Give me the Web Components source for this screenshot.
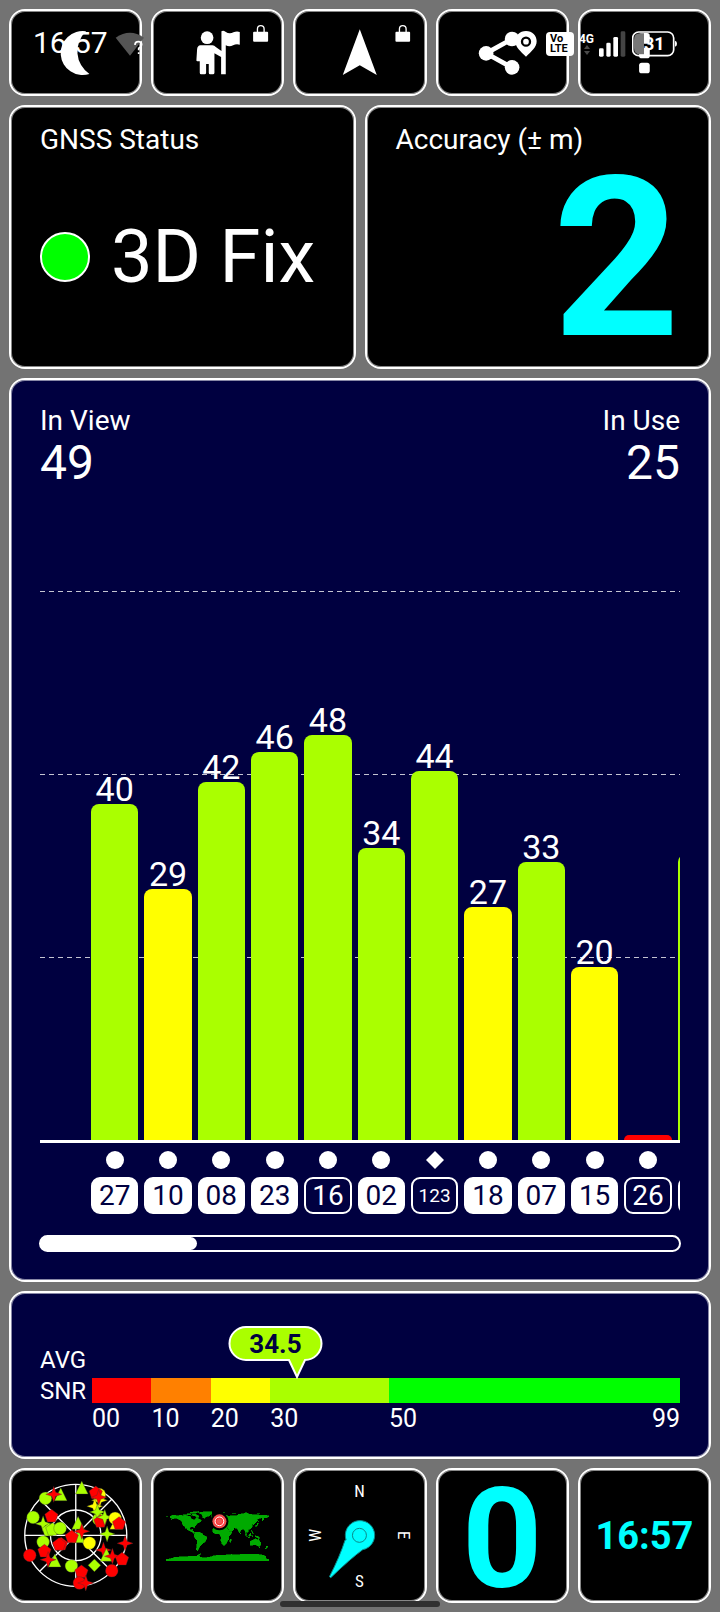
<!DOCTYPE html>
<html lang="en">
<head>
<meta charset="utf-8">
<meta name="viewport" content="width=device-width, initial-scale=1">
<title>GNSS Status</title>
<style>
  body { margin: 0; background: #737373; color: #fff; font-family: Roboto, "Liberation Sans", sans-serif; }
</style>
</head>
<body>
<gnss-app></gnss-app>

<template id="tile">
  <style>
    :host { display: flex; flex-direction: column; box-sizing: border-box; min-width: 0; border: 2px solid #fff; border-radius: 16px; background: #000; box-shadow: inset 0 0 0 1px #fff8; }
    :host([navy]) { background: #000040; }
  </style>
  <slot></slot>
</template>

<template id="tool">
  <style>
    :host { display: block; min-width: 0; }
    button { display: block; box-sizing: border-box; width: 100%; height: 87px; padding: 0; border: 2px solid #fff; border-radius: 16px; background: #000; color: #fff; box-shadow: inset 0 0 0 1px #fff8; }
  </style>
  <button type="button"><slot></slot></button>
</template>

<template id="status">
  <style>
    :host { display: flex; align-items: center; position: absolute; top: 31px; left: 0; right: 0; height: 26px; padding: 0 43px 0 33px; pointer-events: none; }
    .clock { font-size: 30px; line-height: 24px; padding-bottom: 2px; margin-right: 7px; }
    .right { margin-left: auto; display: flex; align-items: center; gap: 6px; }
    .volte { width: 28px; height: 24px; box-sizing: border-box; padding: 2px 4px; border-radius: 4px; background: #fff; color: #000; font-size: 11px; line-height: 10px; font-weight: 700; }
    .net { display: flex; flex-direction: column; align-items: center; width: 13px; font-size: 12px; line-height: 12px; font-weight: 700; }
    .pin { margin-right: 3px; }
    .battery { display: grid; box-sizing: content-box; width: 45px; height: 26px; }
    .battery > * { grid-area: 1 / 1; }
    .battery span { font-size: 18px; line-height: 25px; font-weight: 700; padding-left: 12px; }
    svg { display: block; }
  </style>
  <span class="clock">16:57</span>
  <svg width="29" height="24" viewBox="345 95 87 72"><path d="M347 112Q390 82 432 112L390 166Z" fill="#555"/><path d="M405 134Q405 124 415 124 425 124 425 133 425 139 416 144V150M416 156V161" fill="none" stroke="#fff" stroke-width="5"/></svg>
  <div class="right">
    <svg class="pin" width="22" height="26" viewBox="465 93 66 78"><path d="M498 93c-19 0-32 14-32 31 0 18 16 31 32 46 16-15 32-28 32-46 0-17-13-31-32-31z" fill="#fff"/><circle cx="498" cy="125" r="12" fill="#fff" stroke="#000" stroke-width="7"/></svg>
    <div class="volte">Vo<br>LTE</div>
    <div class="net">4G<svg width="6" height="10" viewBox="0 0 6 10"><path d="M3 0l3 4H0zM3 10L0 6h6z" fill="#4a4a4a"/></svg></div>
    <svg width="27" height="26" viewBox="715 94 81 78" fill="#fff"><rect x="715" y="146" width="14" height="25" rx="4"/><rect x="737" y="129" width="13" height="42" rx="4"/><rect x="758" y="112" width="14" height="59" rx="4"/><rect x="780" y="95" width="14" height="76" rx="4" fill="#444"/></svg>
    <div class="battery">
      <svg width="45" height="26" viewBox="816 94 135 78"><path d="M822 120q0-19 18-19h12v63h-12q-18 0-18-19z" fill="#777"/><rect x="818" y="97" width="123" height="71" rx="18" fill="none" stroke="#fff" stroke-width="5"/><path d="M945 123q6 2 6 9t-6 9z" fill="#fff"/></svg>
      <span>31</span>
    </div>
  </div>
</template>

<template id="chart">
  <style>
    :host { display: block; padding: 25px 29px 28px; }
    .head { display: flex; justify-content: space-between; font-size: 28px; line-height: 32px; }
    .head div:last-child { text-align: right; }
    .head b { display: block; font-weight: 400; font-size: 48px; line-height: 52px; }
    .area { container-type: inline-size; --cell: calc(100cqw / 12); }
    .plot { display: grid; height: 651px; border-bottom: 3px solid #fff; overflow: hidden; }
    .plot > * { grid-area: 1 / 1; min-width: 0; }
    .grid { align-self: end; display: grid; grid-template-rows: repeat(3, 1fr); height: 549px; }
    .grid i { height: 1px; background: repeating-linear-gradient(90deg, #c4c4d2 0 5px, transparent 5px 9px); }
    .row { display: flex; padding-left: 48px; overflow: hidden; }
    .row > div { flex: none; box-sizing: border-box; padding: 0 3px; width: var(--cell); }
    .bars { align-items: flex-end; }
    .bars > div { text-align: center; font-size: 34px; line-height: 30px; }
    .bar { border-radius: 8px 8px 0 0; }
    .ids > div { display: flex; flex-direction: column; align-items: center; gap: 8px; padding-top: 8px; }
    .id { box-sizing: border-box; width: 100%; height: 37px; border: 2px solid #fff; border-radius: 9px; font-size: 28px; line-height: 33px; text-align: center; }
    .used { background: #fff; color: #000040; }
    .long { font-size: 19px; }
    svg { display: block; }
    .scroll { box-sizing: border-box; height: 17px; margin: 21px -1px 0; border: 2px solid #fff; border-radius: 9px; overflow: hidden; background: linear-gradient(#fff, #fff) 0 0 / 12px 100% no-repeat; }
    .thumb { height: 100%; width: 24.5%; background: #fff; border-radius: 0 7px 7px 0; }
  </style>
  <div class="head"><div>In View<b>49</b></div><div>In Use<b>25</b></div></div>
  <div class="area">
    <div class="plot"><div class="grid"><i></i><i></i><i></i></div><div class="row bars"></div></div>
    <div class="row ids"></div>
  </div>
  <div class="scroll"><div class="thumb"></div></div>
</template>

<template id="snr">
  <style>
    :host { display: grid; grid-template-columns: 52px 1fr; padding: 43px 29px 0; font-size: 25px; line-height: 31px; }
    .scale { display: grid; grid-template-columns: 10fr 10fr 10fr 20fr 49fr; grid-template-rows: 25px 34px; padding-top: 42px; position: relative; }
    .scale > span { line-height: 31px; white-space: nowrap; min-width: 0; }
    .last { display: flex; justify-content: space-between; }
    .name { padding-top: 9px; font-size: 24px; }
    .bubble { position: absolute; left: calc(100% * 34.5 / 99 - 69px); top: -10px; width: 95px; height: 53px; display: grid; }
    .bubble > * { grid-area: 1 / 1; }
    .bubble b { color: #000040; font-size: 26px; line-height: 36px; text-align: center; }
    svg { display: block; }
  </style>
  <div class="name">AVG<br>SNR</div>
  <div class="scale">
    <i style="background:#f00"></i><i style="background:#ff8000"></i><i style="background:#ff0"></i><i style="background:#af0"></i><i style="background:#0f0"></i>
    <span>00</span><span>10</span><span>20</span><span>30</span><span class="last"><span>50</span><span>99</span></span>
    <div class="bubble"><svg width="95" height="53" viewBox="0 0 95 53"><path d="M18 1H77a16.500 16.500 0 0 1 0 33L69 51 61 34H18a16.500 16.500 0 0 1 0-33z" fill="#af0" stroke="#fff" stroke-width="2"/></svg><b>34.5</b></div>
  </div>
</template>

<template id="sky">
  <style>:host { display: block; } svg { display: block; width: 100%; height: 131px; }</style>
  <svg viewBox="33 30 387 393"><g fill="none" stroke="#fff" stroke-width="4"><circle cx="227" cy="226" r="153"/><circle cx="227" cy="226" r="76"/><path d="M227 73V379M74 226H380M119 118L335 334M119 334L335 118"/></g><g id="sats" stroke="#333" stroke-width="1"></g></svg>
</template>

<template id="world">
  <style>:host { display: block; } svg { display: block; width: 100%; height: 131px; }</style>
  <svg viewBox="25 30 387 393"><g transform="translate(218 226) scale(.856)" fill="#0a0" stroke="#0a0" stroke-width="2" shape-rendering="crispEdges">
    <path d="M-166-66L-156-71-140-69-128-70-115-68-108-68-95-67-94-60-84-55-80-52-78-58-72-62-65-58-57-52-60-47-66-44-70-42-75-38-76-34-81-30-80-25-83-29-90-30-97-27-97-22-94-18-89-20-87-21-88-16-84-15-83-10-79-9-84-8-95-15-104-19-109-25-115-31-120-34-124-41-124-48-132-55-146-61-156-58-164-55-158-59-166-62z"/>
    <path d="M-113-29l4 5-2 1zM-120-72l10-1 0 4-8 0zM-108-75l14-1 0 3-12 1zM-90-73l12-1 12 6 2 5-10-1-6-5-12-1zM-95-80l15-3 15 0-12 5-14 1zM-68-79l24-4 26 0-4 10-3 4-15 4-6 6-6-7-3-9z"/>
    <path d="M-80-9L-72-12-62-10-52-5-50-1-36 6-39 14-41 21-48 26-57 35-62 40-66 47-69 54-74 51-73 40-71 28-71 18-77 12-81 5z"/>
    <path d="M-10-37L-9-43-1-44-3-48 8-54 9-57 12-56 20-55 24-59 17-61 18-63 24-66 19-64 11-59 5-60 12-65 20-70 28-71 40-67 44-68 60-69 68-69 72-73 86-75 104-78 112-74 130-72 150-71 170-70 179-68 179-65 170-61 163-61 162-56 157-51 156-58 162-62 146-60 138-55 141-51 134-44 128-39 126-35 125-39 119-40 122-36 121-29 114-22 108-21 108-13 104-9 101-13 99-9 103-2 99-8 97-16 91-22 84-19 80-14 77-8 73-17 71-22 66-25 57-26 51-29 56-25 59-22 53-16 44-13 39-21 35-29 35-36 28-37 26-40 20-38 14-45 18-39 10-44 3-42-2-37z"/>
    <path d="M-17-15L-17-21-10-30-5-35 10-37 11-33 20-31 32-31 37-20 43-12 51-12 48-5 40 3 40 15 35 20 32 27 26 34 19 34 15 27 12 17 13 8 9-1 8-5-5-5-12-7zM44 16l5-4 0 6-3 7-3-2zM-10-55l3 1-3 3zM-5-58l4 0 3 6-7 2zM-22-66l8 0-3 3-4 0z"/>
    <path d="M114 22L122 18 130 13 136 12 140 17 143 11 147 19 153 27 150 37 144 39 138 35 132 32 123 34 115 34zM145 42l4 0-2 2zM173 36l4 3-6 8-5 0 5-5zM96-5l8 8 2 4-8-8zM106 7l9 1-3 1zM109-1l7-6 2 5-3 5-5 0zM120 0l4 1-2 5zM131 2l10 1 8 7-8-2-6-2zM120-18l2 5 4 7-4-2zM130-33l8-3 3-8 2 1-3 9-7 3zM80-8l2 2-2 1zM142-52l1 5z"/>
    <path d="M-180 85L-158 80-150 77-120 75-100 74-75 74-67 68-59 65-64 72-60 77-45 79-25 76-10 71 10 70 30 69 50 67 70 69 85 66 110 66 135 66 158 69 170 73 168 80 180 85 180 89-180 89z"/>
    <path d="M20-79l8 0M52-75l14-1M96-80l8 0M140-75l10 0M-179-67l6 0" fill="none"/></g>
    <circle cx="224" cy="184" r="27" fill="#000"/><circle cx="224" cy="184" r="21" fill="#f44b4b"/><circle cx="224" cy="184" r="13" fill="#ff3030" stroke="#fff" stroke-width="3"/><circle cx="224" cy="184" r="8" fill="#e55"/>
  </svg>
</template>

<template id="compass">
  <style>
    :host { display: block; }
    svg { display: block; width: 100%; height: 131px; }
    text { font-family: "Roboto Condensed", "Liberation Sans Narrow", Roboto, sans-serif; font-size: 51px; font-weight: 400; fill: #fff; text-anchor: middle; }
  </style>
  <svg viewBox="32 30 387 393">
    <text x="225" y="110">N</text><text x="225" y="381">S</text><text transform="translate(341 226) rotate(90)">E</text><text transform="translate(110 226) rotate(-90)">W</text>
    <path d="M185 240A44 44 0 1 1 235 269Q198 296 139 353L135 350Q166 290 182 240z" fill="#0ff" stroke="#0a8888" stroke-width="3"/><circle cx="225" cy="226" r="21" fill="#0ff" stroke="#0a8888" stroke-width="3"/>
  </svg>
</template>

<template id="app">
  <style>
    :host { display: flex; flex-direction: column; gap: 9px; padding: 9px; position: relative; }
    .five { display: grid; grid-template-columns: repeat(5, 1fr); gap: 9px; }
    .two { display: grid; grid-template-columns: 1fr 1fr; gap: 9px; }
    .two gnss-tile { min-height: 264px; padding: 17px 29px 0; }
    .two span { font-size: 28px; line-height: 32px; }
    .fix { display: flex; align-items: center; gap: 21px; margin-top: 61px; font-size: 74px; line-height: 80px; white-space: nowrap; }
    .lamp { box-sizing: border-box; width: 50px; height: 50px; border: 2px solid #fff; border-radius: 50%; background: #0f0; }
    .acc { margin-top: 23px; text-align: right; font-size: 222px; line-height: 160px; font-weight: 700; color: #0ff; }
    .snr { min-height: 168px; }
    .small gnss-tile { min-height: 135px; justify-content: center; text-align: center; color: #0ff; font-weight: 700; }
    .speed { font-size: 140px; line-height: 123px; padding-top: 8px; }
    .time { font-size: 38px; line-height: 44px; }
    svg { display: block; width: 100%; height: 83px; }
    .home { position: absolute; bottom: 5px; left: 50%; width: 160px; height: 6px; margin-left: -80px; border-radius: 3px; background: #303030; }
  </style>
  <div class="five">
    <tool-button aria-label="Night mode"><svg viewBox="33 33 387 249"><path d="M258 94A66 66 0 1 0 268 222A82 82 0 0 1 258 94z" fill="#fff"/></svg></tool-button>
    <tool-button aria-label="Waypoints"><svg viewBox="459 33 387 249" fill="#fff"><circle cx="621" cy="113" r="19"/><path d="M601 136H637Q643 136 647 141L664 153V94Q669 90 676 95 688 104 700 97 710 92 719 96V134Q708 131 699 136 688 142 677 136V223H663V171L643 160V218Q643 223 638 223H630Q626 223 626 218V192H618V218Q618 223 613 223H603Q599 223 599 218V184H592Q588 184 589 179L591 148Q592 137 601 136z"/><rect x="759" y="95" width="45" height="30" rx="3"/><path d="M772 96V87q0-10 10-10t10 10v9" fill="none" stroke="#fff" stroke-width="4"/></svg></tool-button>
    <tool-button aria-label="Navigate"><svg viewBox="-194 33 387 249" fill="#fff"><path d="M0 88L51 225 0 196-51 225z"/><rect x="107" y="95" width="44" height="30" rx="3"/><path d="M119 96V87q0-10 10-10t10 10v9" fill="none" stroke="#fff" stroke-width="4"/></svg></tool-button>
    <tool-button aria-label="Share"><svg viewBox="233 33 387 249" fill="#fff"><path d="M455 117L377 160 455 203" fill="none" stroke="#fff" stroke-width="14"/><circle cx="455" cy="117" r="22"/><circle cx="377" cy="160" r="22"/><circle cx="455" cy="202" r="22"/></svg></tool-button>
    <tool-button aria-label="More"><svg viewBox="660 33 387 249" fill="#fff"><rect x="837" y="99" width="32" height="32" rx="8"/><rect x="837" y="143" width="32" height="32" rx="8"/><rect x="837" y="188" width="32" height="32" rx="8"/></svg></tool-button>
  </div>
  <div class="two">
    <gnss-tile><span>GNSS Status</span><div class="fix"><i class="lamp"></i>3D Fix</div></gnss-tile>
    <gnss-tile><span>Accuracy (± m)</span><div class="acc">2</div></gnss-tile>
  </div>
  <gnss-tile navy><sat-chart></sat-chart></gnss-tile>
  <gnss-tile navy class="snr"><snr-meter></snr-meter></gnss-tile>
  <div class="five small">
    <gnss-tile><sky-plot></sky-plot></gnss-tile>
    <gnss-tile><world-map></world-map></gnss-tile>
    <gnss-tile><compass-dial></compass-dial></gnss-tile>
    <gnss-tile><div class="speed">0</div></gnss-tile>
    <gnss-tile><div class="time">16:57</div></gnss-tile>
  </div>
  <status-bar></status-bar>
  <div class="home"></div>
</template>

<script>
const define = (name, template, ready) => customElements.define(name, class extends HTMLElement {
  constructor() {
    super();
    this.attachShadow({ mode: 'open' }).append(document.getElementById(template).content.cloneNode(true));
    if (ready) ready(this.shadowRoot, this);
  }
});

const G = '#af0', Y = '#ff0', R = '#f00';
const satellites = [
  // value, bar height, colour, id, in use, marker
  ['40', 336, G, '27', 1], ['29', 251, Y, '10', 1], ['42', 358, G, '08', 1], ['46', 388, G, '23', 1],
  ['48', 405, G, '16', 0], ['34', 292, G, '02', 1], ['44', 369, G, '123', 0, 'diamond'], ['27', 233, Y, '18', 1],
  ['33', 278, G, '07', 1], ['20', 173, Y, '15', 1], ['', 5, R, '26', 0], ['', 286, G, '', 0]
];

const shapes = {
  c: '<circle r="19"/>',
  p: '<path d="M0-20L20-5 12 18H-12L-20-5z"/>',
  t: '<path d="M0-21L19 18H-19z"/>',
  s: '<path d="M0-24L6-6 24 0 6 6 0 24-6 6-24 0-6-6z"/>',
  d: '<path d="M0-19L19 0 0 19-19 0z"/>'
};
const sky = [
  ['c',136,115,G],['t',182,104,G],['s',161,103,R],['t',245,84,G],['c',298,104,Y],['p',287,98,R],['s',298,121,Y],['s',296,112,R],['s',284,139,Y],
  ['c',99,172,G],['p',154,168,R],['s',129,191,G],['p',146,210,G],['p',157,208,G],['c',180,205,G],['c',129,246,G],['t',234,190,G],['t',236,230,G],
  ['p',215,230,R],['s',245,214,R],['c',268,249,Y],['c',296,178,G],['s',292,156,G],['p',301,184,R],['s',314,172,G],['t',348,190,Y],['c',345,175,Y],['p',357,190,R],
  ['s',321,222,G],['s',375,250,R],['p',183,252,R],['p',177,253,R],['c',89,286,R],['p',133,273,R],['t',164,303,G],['s',144,299,R],['c',214,318,G],['d',283,316,G],
  ['s',310,270,R],['t',319,286,G],['s',337,289,R],['p',366,297,R],['c',335,332,R],['p',244,335,R],['c',238,369,R],['s',257,369,R]
];

define('gnss-tile', 'tile');
define('tool-button', 'tool', (root, host) => {
  const label = host.getAttribute('aria-label');
  if (label) root.querySelector('button').setAttribute('aria-label', label);
});
define('status-bar', 'status');
define('snr-meter', 'snr');
define('world-map', 'world');
define('compass-dial', 'compass');
define('sky-plot', 'sky', root => {
  root.getElementById('sats').innerHTML = sky.map(([k, x, y, c]) => `<g transform="translate(${x} ${y})" fill="${c}">${shapes[k]}</g>`).join('');
});
define('sat-chart', 'chart', root => {
  root.querySelector('.bars').innerHTML = satellites.map(([v, h, c]) =>
    `<div>${v}<div class="bar" style="height:${h}px;background:${c}"></div></div>`).join('');
  root.querySelector('.ids').innerHTML = satellites.map(([, , , id, used, mark]) =>
    `<div><svg width="18" height="18" viewBox="0 0 18 18" fill="#fff">${mark ? '<path d="M9 0L18 9 9 18 0 9z"/>' : '<circle cx="9" cy="9" r="9"/>'}</svg>` +
    `<div class="id${used ? ' used' : ''}${id.length > 2 ? ' long' : ''}">${id}</div></div>`).join('');
});
define('gnss-app', 'app');
</script>
</body>
</html>
